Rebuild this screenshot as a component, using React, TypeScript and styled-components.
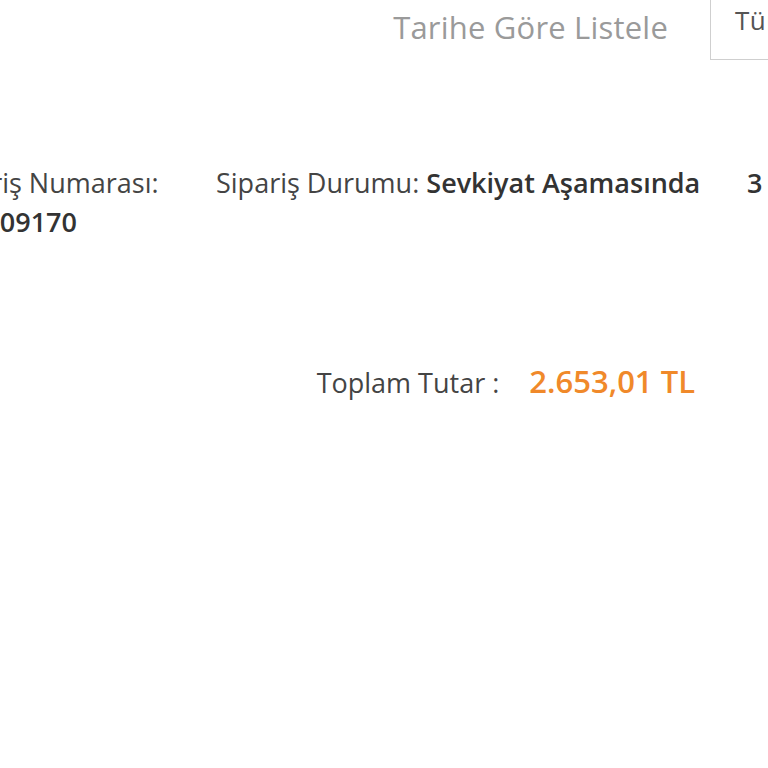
import React from "react";
import styled, { createGlobalStyle } from "styled-components";

const Global = createGlobalStyle`
  html, body { margin: 0; padding: 0; background: #fff; }
  body { font-family: "Open Sans", "Noto Sans", sans-serif; width: 768px; height: 768px; overflow: hidden; }
`;

const Page = styled.div`
  width: 768px;
  height: 768px;
  overflow: hidden;
  position: relative;
`;

const TopBar = styled.div`
  display: flex;
  justify-content: flex-end;
  align-items: flex-end;
  height: 60px;
  margin-right: -140px;
`;

const Title = styled.div`
  font-size: 31px;
  color: #9a9a9a;
  line-height: 56px;
  margin-right: 42px;
  margin-bottom: 5px;
  letter-spacing: 0.2px;
`;

const Select = styled.div`
  width: 198px;
  height: 70px;
  margin-top: -11px;
  border: 1px solid #cfcfcf;
  box-sizing: border-box;
  font-size: 26px;
  color: #555;
  padding: 11px 0 0 24px;
  letter-spacing: 0.5px;
`;

const InfoRow = styled.div`
  display: flex;
  margin-top: 103px;
  margin-left: -62px;
`;

const Col = styled.div<{ $w: number }>`
  width: ${(p) => p.$w}px;
  flex: none;
  font-size: 27px;
  line-height: 39px;
  color: #444;
`;

const Strong = styled.span`
  font-weight: 600;
  color: #333;
`;

const TotalRow = styled.div`
  display: flex;
  justify-content: flex-end;
  align-items: baseline;
  margin-top: 119px;
  width: 695px;
`;

const TotalLabel = styled.span`
  font-size: 27px;
  color: #444;
  margin-right: 30px;
`;

const TotalValue = styled.span`
  font-size: 31px;
  font-weight: 600;
  color: #f0892a;
`;

export default function App() {
  return (
    <Page>
      <Global />
      <TopBar>
        <Title>Tarihe Göre Listele</Title>
        <Select>Tümü</Select>
      </TopBar>
      <InfoRow>
        <Col $w={278}>
          Sipariş Numarası:
          <br />
          <Strong>100409170</Strong>
        </Col>
        <Col $w={531}>
          Sipariş Durumu: <Strong>Sevkiyat Aşamasında</Strong>
        </Col>
        <Col $w={120}>
          <Strong>3</Strong>
        </Col>
      </InfoRow>
      <TotalRow>
        <TotalLabel>Toplam Tutar :</TotalLabel>
        <TotalValue>2.653,01 TL</TotalValue>
      </TotalRow>
    </Page>
  );
}
